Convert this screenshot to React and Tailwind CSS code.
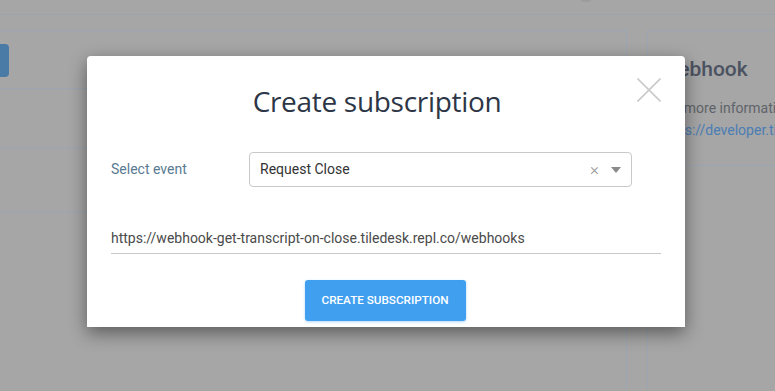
import { useState } from 'react'

export default function App() {
  const [url, setUrl] = useState('https://webhook-get-transcript-on-close.tiledesk.repl.co/webhooks')

  return (
    <div className="relative w-[775px] h-[391px] overflow-hidden bg-[#a6a6a6] font-['Roboto',sans-serif]">

      {/* Page behind the dialog */}
      <div className="relative h-[15px] border-b border-[#9da3ab]">
        <div className="absolute left-[578px] top-[-12px] w-[16px] h-[14px] rounded-full bg-[#9c9c9c]" />
      </div>

      <div className="flex gap-[20px] pt-[15px]">
        <div className="w-[627px] shrink-0 border-t border-r border-[#9ca5b2] h-[360px]">
          <div className="h-[58px] border-b border-[#9ca5b2] pt-[13px]">
            <div className="w-[9px] h-[33px] rounded-r-[4px] bg-[#4a7aa6]" />
          </div>
          <div className="h-[60px] border-b border-[#9ca5b2]" />
          <div className="h-[64px] border-b border-[#9ca5b2]" />
        </div>

        <div className="flex-1 min-w-0 border-t border-l border-[#9ca5b2] h-[360px]">
          <div className="h-[135px] border-b border-[#9ca5b2] pl-[12px] pt-[24px] overflow-hidden">
            <div className="text-[21px] leading-[28px] font-medium text-[#4b5261]">Webhook</div>
            <div className="mt-[15px] text-[14px] text-[#5f636a] whitespace-nowrap">For more information</div>
            <div className="mt-[1px] text-[14px] text-[#4a7db4] whitespace-nowrap">https://developer.tiledesk.com</div>
          </div>
        </div>
      </div>

      {/* Dialog */}
      <div className="absolute left-[87px] top-[56px] w-[598px] h-[271px] bg-white rounded-t-[4px] shadow-[0_6px_18px_rgba(0,0,0,0.45)] px-[24px] pt-[28px]">
        <button className="absolute right-[24px] top-[22px] w-[24px] h-[24px]">
          <svg width="24" height="24" viewBox="0 0 24 24" stroke="#cacaca" strokeWidth="1.6" fill="none">
            <line x1="0.5" y1="0.5" x2="23.5" y2="23.5" />
            <line x1="23.5" y1="0.5" x2="0.5" y2="23.5" />
          </svg>
        </button>

        <h2 className="text-center pr-[18px] text-[28px] leading-[34px] text-[#2d3646] font-['Open_Sans',sans-serif] tracking-[-0.3px]">
          Create subscription
        </h2>

        <div className="flex items-center mt-[34px]">
          <label className="w-[138px] text-[14px] text-[#587a92]">Select event</label>
          <div className="flex items-center w-[383px] h-[35px] border border-[#c9c9c9] rounded-[4px] pl-[10px] pr-[10px]">
            <span className="flex-1 text-[14px] text-[#333]">Request Close</span>
            <span className="text-[17px] leading-none font-light text-[#999] mr-[12px]">×</span>
            <svg width="10" height="6" viewBox="0 0 10 6"><path d="M0 0 L10 0 L5 6 Z" fill="#8a8a8a" /></svg>
          </div>
        </div>

        <input
          value={url}
          onChange={(e) => setUrl(e.target.value)}
          className="block mt-[35px] w-[550px] h-[32px] border-b border-[#c9c9c9] text-[14px] text-[#4a4a4a] outline-none bg-transparent"
        />

        <div className="flex justify-center mt-[26px] pr-[2px]">
          <button className="w-[161px] h-[41px] rounded-[3px] bg-[#419ff0] text-white text-[11.7px] font-medium shadow-[0_1px_3px_rgba(66,160,240,0.4)]">
            CREATE SUBSCRIPTION
          </button>
        </div>
      </div>
    </div>
  )
}
